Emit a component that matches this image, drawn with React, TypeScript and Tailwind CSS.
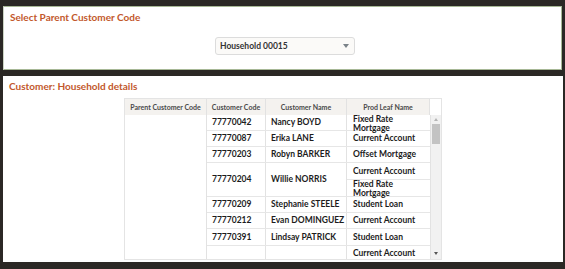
import React from 'react';

type Row = { code: string; name: string; prods: string[][]; h: string };

const rows: Row[] = [
  { code: '77770042', name: 'Nancy BOYD', prods: [['Fixed Rate', 'Mortgage']], h: 'h-[16px]' },
  { code: '77770087', name: 'Erika LANE', prods: [['Current Account']], h: 'h-[16px]' },
  { code: '77770203', name: 'Robyn BARKER', prods: [['Offset Mortgage']], h: 'h-[16px]' },
  { code: '77770204', name: 'Willie NORRIS', prods: [['Current Account'], ['Fixed Rate', 'Mortgage']], h: 'h-[34px]' },
  { code: '77770209', name: 'Stephanie STEELE', prods: [['Student Loan']], h: 'h-[16px]' },
  { code: '77770212', name: 'Evan DOMINGUEZ', prods: [['Current Account']], h: 'h-[16px]' },
  { code: '77770391', name: 'Lindsay PATRICK', prods: [['Student Loan']], h: 'h-[17px]' },
  { code: '', name: '', prods: [['Current Account']], h: 'h-[16px]' },
];

const ProdCell: React.FC<{ lines: string[] }> = ({ lines }) => {
  if (lines.length > 1) {
    return (
      <div className="flex-1 min-h-0 pl-[6px] flex flex-col justify-start leading-[9px]">
        {lines.map((l) => (
          <div key={l}>{l}</div>
        ))}
      </div>
    );
  }
  return <div className="flex-1 flex items-center pl-[6px]">{lines[0]}</div>;
};

const App: React.FC = () => {
  return (
    <div className="w-[565px] h-[269px] bg-[#2b2825] pt-[6px] pl-[3px] pr-[2px] font-['Lato',sans-serif] overflow-hidden">
      <div className="h-[64px] mr-[1px] bg-white border border-[#a7b896] border-l-[#cdd5c5]">
        <div className="pl-[6px] pt-[3px] text-[10px] font-bold text-[#c2582c]">Select Parent Customer Code</div>
        <div className="mt-[12px] ml-[211px] w-[140px] h-[18px] rounded-[3px] border border-[#dcdcdc] bg-[#fbfaf8] flex items-center justify-between pl-[4px] pr-[5px]">
          <span className="text-[8.5px] font-bold text-[#333]">Household 00015</span>
          <span className="w-0 h-0 border-l-[3px] border-r-[3px] border-t-[4px] border-l-transparent border-r-transparent border-t-[#7a8288]" />
        </div>
      </div>

      <div className="mt-[6px] h-[186px] bg-white">
        <div className="pl-[6px] pt-[3px] text-[10px] font-bold text-[#c2582c]">Customer: Household details</div>
        <div className="mt-[4px] ml-[121px] w-[318px] h-[162px] border border-[#e4e4e4] text-[#1c1c1c] overflow-hidden">
          <div className="flex h-[16px] text-[7px] font-bold text-[#4a4a4a]">
            <div className="w-[82px] bg-[#f4f2ef] border-r border-[#e2e2e2] flex items-center justify-center">Parent Customer Code</div>
            <div className="w-[59px] bg-[#f4f2ef] border-r border-[#e2e2e2] flex items-center justify-center">Customer Code</div>
            <div className="w-[81px] bg-[#f4f2ef] border-r border-[#e2e2e2] flex items-center justify-center">Customer Name</div>
            <div className="w-[83px] bg-[#f4f2ef] border-r border-[#e2e2e2] flex items-center justify-center">Prod Leaf Name</div>
            <div className="flex-1 bg-white" />
          </div>
          <div className="flex h-[144px]">
            <div className="w-[82px] border-r border-[#e2e2e2]" />
            <div className="w-[223px] overflow-hidden text-[8.5px] font-bold">
              {rows.map((r, i) => (
                <div key={i} className={`flex ${r.h} border-b border-[#e6e6e6]`}>
                  <div className="w-[59px] border-r border-[#e2e2e2] flex items-center pl-[5px]">{r.code}</div>
                  <div className="w-[81px] border-r border-[#e2e2e2] flex items-center pl-[5px]">{r.name}</div>
                  <div className="w-[83px] flex flex-col">
                    {r.prods.map((p, j) => (
                      <div key={j} className={`flex-1 flex min-h-0 ${j > 0 ? 'border-t border-[#e6e6e6]' : ''}`}>
                        <ProdCell lines={p} />
                      </div>
                    ))}
                  </div>
                </div>
              ))}
            </div>
            <div className="flex-1 bg-[#f1f1f1] border-l border-[#e2e2e2] flex flex-col items-center pt-[3px] pb-[4px]">
              <span className="w-0 h-0 border-l-[2.5px] border-r-[2.5px] border-b-[3px] border-l-transparent border-r-transparent border-b-[#b5b5b5]" />
              <div className="mt-[3px] w-[8px] h-[20px] bg-[#c3c3c3]" />
              <div className="flex-1" />
              <span className="w-0 h-0 border-l-[2.5px] border-r-[2.5px] border-t-[3px] border-l-transparent border-r-transparent border-t-[#555]" />
            </div>
          </div>
        </div>
      </div>
    </div>
  );
};

export default App;
